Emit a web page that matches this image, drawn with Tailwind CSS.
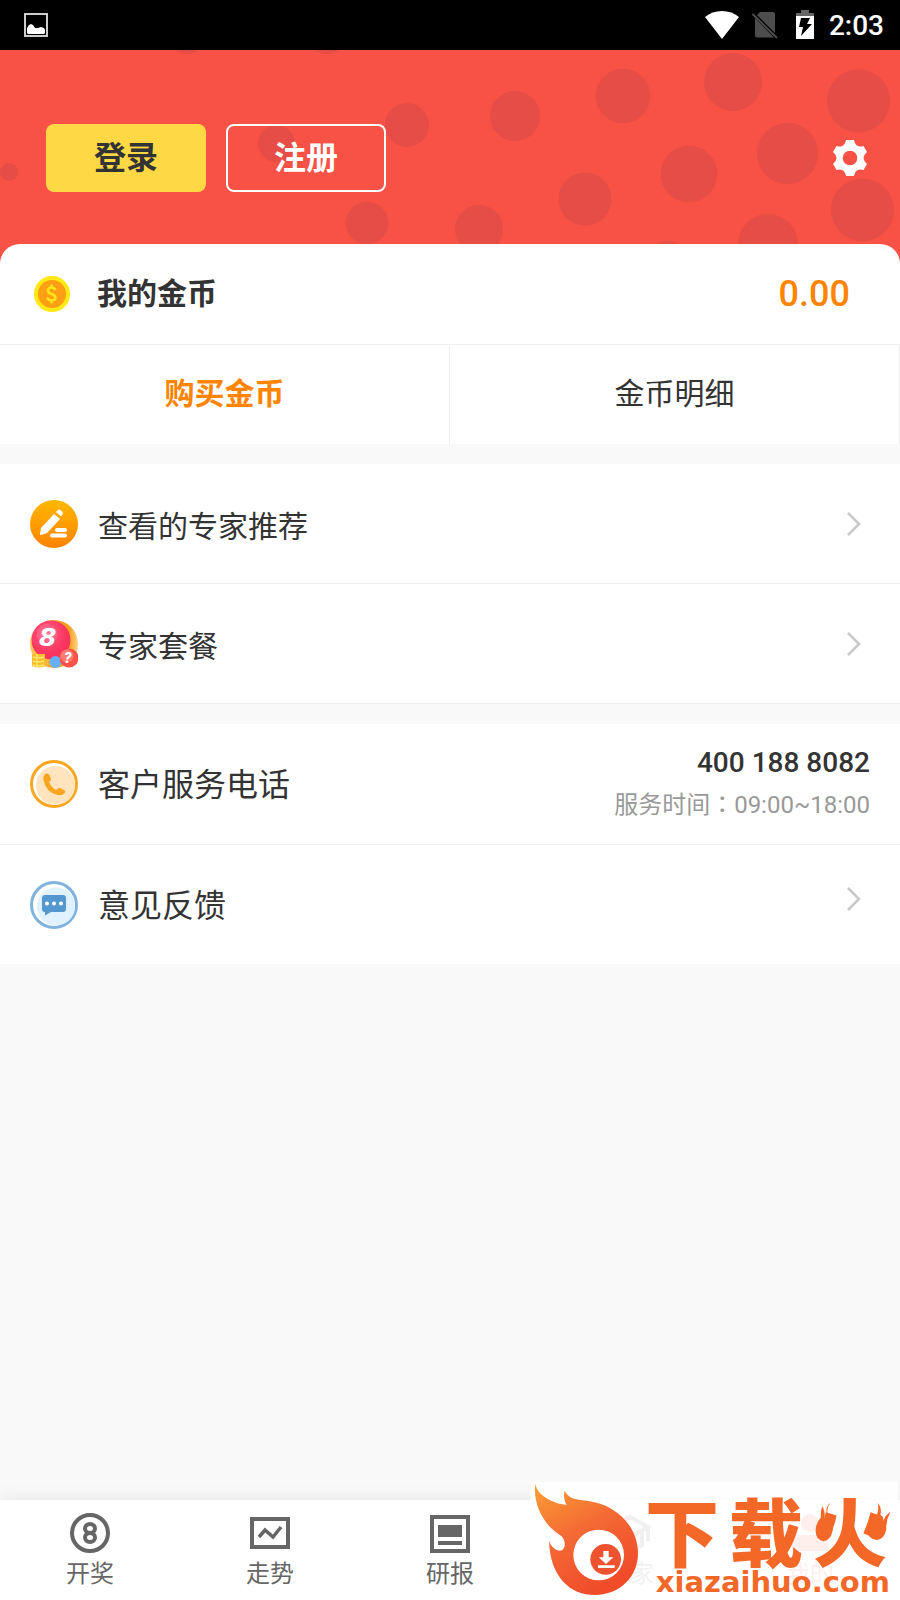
<!DOCTYPE html>
<html lang="zh-CN">
<head>
    <meta charset="UTF-8">
    <meta name="viewport" content="width=device-width, initial-scale=1.0">
    <title>我的</title>
    <script src="https://cdn.jsdelivr.net/npm/@tailwindcss/browser@4"></script>
</head>
<body class="bg-[#f9f9f9] font-[Roboto,'Noto_Sans_CJK_SC',sans-serif] text-[#333]">
<div class="relative flex min-h-screen flex-col">

    <!-- 状态栏 -->
    <div class="flex h-[50px] items-center bg-black pr-4 pl-6 text-white">
        <svg class="size-6" viewBox="0 0 24 24" fill="none">
            <rect x="1" y="1" width="22" height="22" stroke="#ccc" stroke-width="2"/>
            <path d="M3 20v-5l2-3 2-1 2 1 2 3 3 0 3-1 3 1 1 2v3l-1 1H4z" fill="#fff"/>
        </svg>
        <svg class="ml-auto h-7 w-[34px]" viewBox="0 0 34 28" fill="#fff">
            <path d="M0 6Q7 0 17 0t17 6L17 28z"/>
        </svg>
        <svg class="ml-3 h-7 w-7" viewBox="0 0 28 28">
            <path d="M9 1h13q2 0 2 2v19L6 4z M4 7l19 19.500H6q-2 0-2-2z" fill="#4d4d4d"/>
            <path d="M1.500 3l24.500 24" stroke="#4d4d4d" stroke-width="2"/>
        </svg>
        <svg class="ml-4 h-[30px] w-5" viewBox="0 0 20 30">
            <path d="M1 3h5V0h8v3h5v4H1z" fill="#666"/>
            <path d="M1 6h18v23H1z" fill="#fff"/>
            <path d="M6 8h9l-3 6h5L6 26l2-9H4z" fill="#000"/>
        </svg>
        <span class="ml-3.5 pt-0.5 text-[28px] leading-10 font-medium">2:03</span>
    </div>

    <!-- 头部 -->
    <header class="relative bg-[#f85145] pb-5">
        <svg class="absolute inset-0 h-full w-full" viewBox="0 50 900 214" preserveAspectRatio="xMaxYMin slice" fill="#e64d46">
            <circle cx="187" cy="37" r="17"/>
            <circle cx="327" cy="32" r="22"/>
            <circle cx="9" cy="172" r="9"/>
            <circle cx="276.500" cy="143.500" r="18.500"/>
            <circle cx="407" cy="125" r="22"/>
            <circle cx="367" cy="223" r="21.300"/>
            <circle cx="479" cy="229" r="24"/>
            <circle cx="515" cy="116" r="25"/>
            <circle cx="585" cy="199" r="26.500"/>
            <circle cx="623" cy="96" r="27.300"/>
            <circle cx="667" cy="266" r="25"/>
            <circle cx="689" cy="174" r="28.300"/>
            <circle cx="733" cy="82" r="29"/>
            <circle cx="768" cy="244" r="30"/>
            <circle cx="787.500" cy="153.500" r="30.500"/>
            <circle cx="858.500" cy="101" r="31.500"/>
            <circle cx="862.500" cy="210" r="31.500"/>
        </svg>
        <div class="relative flex items-center gap-5 pt-[74px] pr-8 pb-[52px] pl-[46px]">
            <button class="h-[68px] w-40 rounded-lg bg-[#ffd945] text-[32px] leading-10 font-bold">登录</button>
            <button class="h-[68px] w-40 rounded-lg border-2 border-white text-[32px] leading-10 font-bold text-white">注册</button>
            <button class="ml-auto" aria-label="设置">
                <svg class="size-9" viewBox="-18 -18 36 36" fill="#fff" fill-rule="evenodd">
                    <path d="M-4-18H4Q5-13 8-12 10-11 13.500-12L17-6Q13.500-3 13.500 0T17 6L13.500 12Q10 11 8 12 5 13 4 18H-4Q-5 13-8 12-10 11-13.500 12L-17 6Q-13.500 3-13.500 0T-17-6L-13.500-12Q-10-11-8-12-5-13-4-18zM0-7.300A7.300 7.300 0 1 0 0 7.300 7.300 7.300 0 1 0 0-7.300z"/>
                </svg>
            </button>
        </div>
    </header>

    <!-- 金币 -->
    <section class="relative -mt-5 rounded-t-[20px] bg-white">
        <div class="flex h-[100px] items-center pr-[50px] pl-[34px]">
            <svg class="size-9" viewBox="0 0 36 36">
                <circle cx="18" cy="18" r="18" fill="#ffe912"/>
                <circle cx="18" cy="18" r="14" fill="#ff9f14"/>
                <path d="M21.500 14Q20.500 11.500 17.500 11.500q-3.500 0-3.500 3 0 2.500 3.500 3.500t4 3.500q0 3-4 3-3.500 0-4-3M17.500 8.500v3M17.500 24.500v3" fill="none" stroke="#ffe41a" stroke-width="2.600"/>
            </svg>
            <h2 class="ml-[27px] text-[30px] leading-10 font-bold">我的金币</h2>
            <span class="ml-auto text-4xl font-medium text-[#ff8400]">0.00</span>
        </div>
        <div class="grid h-[100px] grid-cols-2 border-t border-[#eee] text-[30px] leading-10">
            <button class="border-r border-[#eee] pb-0.5 font-bold text-[#ff8400]">购买金币</button>
            <button class="border-r border-[#eee] pb-0.5">金币明细</button>
        </div>
    </section>

    <!-- 专家 -->
    <nav class="mt-5 bg-white text-[30px] leading-10">
        <a href="#" class="flex h-[120px] items-center border-b border-[#eee] pr-[38px] pl-[30px]">
            <svg class="size-12" viewBox="0 0 48 48">
                <defs>
                    <linearGradient id="pen" x2="0" y2="1"><stop stop-color="#ffb800"/><stop offset="1" stop-color="#ff8200"/></linearGradient>
                </defs>
                <circle cx="24" cy="24" r="24" fill="url(#pen)"/>
                <path d="M24 14l6 5-13 14-6 2q-1 0-1-1l1-6z M26 12l2-2q1-1 2.500 0l2 2q1 1 0 2.500l-1.500 2z" fill="#fff"/>
                <rect x="25" y="28" width="12" height="4" rx="2" fill="#fff"/>
                <rect x="20" y="33.500" width="17" height="4" rx="2" fill="#fff"/>
            </svg>
            <span class="ml-5 pt-1.5">查看的专家推荐</span>
            <svg class="ml-auto h-6 w-4" viewBox="0 0 16 24" fill="none" stroke="#c8c8c8" stroke-width="2.500"><path d="M2 1l11 11L2 23"/></svg>
        </a>
        <a href="#" class="flex h-[120px] items-center border-b border-[#eee] pr-[38px] pl-[30px]">
            <svg class="size-12" viewBox="0 0 48 48">
                <defs>
                    <linearGradient id="gold" x2="1"><stop stop-color="#ffc65a"/><stop offset=".8" stop-color="#f59a16"/><stop offset="1" stop-color="#ffd48a"/></linearGradient>
                    <radialGradient id="ball" cx=".4" cy=".35"><stop stop-color="#ff7a9c"/><stop offset=".5" stop-color="#ff5a80"/><stop offset=".55" stop-color="#ff4771"/><stop offset="1" stop-color="#f8355e"/></radialGradient>
                </defs>
                <circle cx="24" cy="24" r="24" fill="url(#gold)"/>
                <circle cx="21" cy="20" r="19.500" fill="url(#ball)"/>
                <text x="9" y="26" font-family="DejaVu Sans" font-size="25" font-weight="700" font-style="italic" fill="#fff">8</text>
                <path d="M2 34h13v12q-6 3-13 0z" fill="#f8be2c"/>
                <path d="M3 37q5 2 11 0M3 41q5 2 11 0M3 45q5 2 11 0M7 34v12" stroke="#ffe56b" stroke-width="1.500" fill="none"/>
                <circle cx="25.500" cy="42" r="6" fill="#66aef5"/>
                <circle cx="39" cy="38" r="9.500" fill="#ff5248"/>
                <circle cx="37" cy="36" r="6.500" fill="#ff7a70"/>
                <text x="34" y="43" font-size="15" font-weight="900" font-style="italic" fill="#fff">?</text>
            </svg>
            <span class="ml-5 pt-1.5">专家套餐</span>
            <svg class="ml-auto h-6 w-4" viewBox="0 0 16 24" fill="none" stroke="#c8c8c8" stroke-width="2.500"><path d="M2 1l11 11L2 23"/></svg>
        </a>
    </nav>

    <!-- 客服 -->
    <nav class="mt-5 bg-white text-[32px] leading-10">
        <a href="#" class="flex h-[121px] items-center border-b border-[#eee] pr-[30px] pl-[30px]">
            <svg class="size-12" viewBox="0 0 48 48">
                <circle cx="24" cy="24" r="22.500" fill="#fff" stroke="#f9a720" stroke-width="3"/>
                <circle cx="25.500" cy="25.500" r="19.500" fill="#ffe4bd"/>
                <path d="M15 14q3-1.500 4.500 1l1.500 4q0 2-2 3 2 5 7 8 2-2.500 4-2l4 2q2 2 .5 3-3 3-7 2-12-3-14-15-.5-4 1.500-6z" fill="#f9a51f"/>
            </svg>
            <span class="ml-5 pt-0.5">客户服务电话</span>
            <span class="ml-auto flex flex-col text-right">
                <strong class="text-[28px] leading-10 font-medium">400 188 8082</strong>
                <span class="text-2xl leading-10 text-[#999]">服务时间<span lang="zh-TW" class="font-['Noto_Sans_CJK_TC']">：</span>09:00~18:00</span>
            </span>
        </a>
        <a href="#" class="flex h-[119px] items-center pr-[38px] pl-[30px]">
            <svg class="size-12" viewBox="0 0 48 48">
                <circle cx="24" cy="24" r="22.500" fill="#fff" stroke="#80b4de" stroke-width="3"/>
                <circle cx="26" cy="25.500" r="19" fill="#e0f1ff"/>
                <path d="M15 14h18q3 0 3 3v11q0 3-3 3H21l-6 3.500V31q-3 0-3-3V17q0-3 3-3z" fill="#5598d0"/>
                <g fill="#fff"><circle cx="17" cy="22.500" r="2"/><circle cx="24" cy="22.500" r="2"/><circle cx="31" cy="22.500" r="2"/></g>
            </svg>
            <span class="ml-5 pt-0.5">意见反馈</span>
            <svg class="mb-3 ml-auto h-6 w-4" viewBox="0 0 16 24" fill="none" stroke="#c8c8c8" stroke-width="2.500"><path d="M2 1l11 11L2 23"/></svg>
        </a>
    </nav>

    <!-- 底部导航 -->
    <nav class="mt-auto grid h-[100px] grid-cols-5 bg-white text-2xl leading-9 text-[#666] shadow-[0_-2px_16px_rgba(0,0,0,0.08)]">
        <a href="#" class="flex flex-col items-center pt-3">
            <svg class="size-11" viewBox="0 0 44 44" fill="none" stroke="#666" stroke-width="4">
                <circle cx="22" cy="21" r="18"/>
                <ellipse cx="22" cy="16.500" rx="5" ry="4.500"/><ellipse cx="22" cy="25.500" rx="5" ry="4.500"/>
            </svg>
            开奖
        </a>
        <a href="#" class="flex flex-col items-center pt-3">
            <svg class="size-11" viewBox="0 0 44 44" fill="none" stroke="#666" stroke-width="4">
                <path d="M2 7h0M4 7h36v28H4z"/>
                <path d="M11 25l6-7 8 7 8-10" stroke-width="3.500"/>
            </svg>
            走势
        </a>
        <a href="#" class="flex flex-col items-center pt-3">
            <svg class="size-11" viewBox="0 0 44 44" fill="none" stroke="#666" stroke-width="4">
                <path d="M4 5h36v34H4z"/>
                <path d="M10 13h24v12H10zM10 29h24v4H10z" fill="#666" stroke="none"/>
            </svg>
            研报
        </a>
        <a href="#" class="flex flex-col items-center pt-3">
            <svg class="size-11" viewBox="0 0 44 44" fill="none" stroke="#666" stroke-width="4">
                <path d="M4 15L22 5l18 10-18 10zM10 20v13l12 6 12-6V20M40 15v14"/>
            </svg>
            专家
        </a>
        <a href="#" class="flex flex-col items-center pt-3 text-[#f95246]">
            <svg class="size-11" viewBox="0 0 44 44" fill="#f95246">
                <circle cx="22" cy="11" r="9"/>
                <path d="M4 39V28q0-5 5-5h26q5 0 5 5v11z"/>
            </svg>
            我的
        </a>
    </nav>

    <!-- 水印 -->
    <div class="absolute right-[2px] bottom-0 flex h-[118px] w-[368px] bg-white/90 text-[#f4601c]">
        <svg class="h-[118px] w-[110px] shrink-0 opacity-95" viewBox="30 36 330 354">
            <defs>
                <linearGradient id="flame" x1="0" y1="0" x2=".5" y2="1"><stop stop-color="#fb9c2c"/><stop offset=".5" stop-color="#f4622a"/><stop offset="1" stop-color="#f0431f"/></linearGradient>
            </defs>
            <path d="M46 42C52 75 95 100 140 105 132 90 130 78 134 62 145 85 165 88 200 92 290 102 354 170 354 250 354 320 300 375 225 375 150 375 90 320 87 212 95 235 115 246 127 240 140 230 135 205 120 195 70 165 38 100 46 42z" fill="url(#flame)"/>
            <circle cx="236" cy="255" r="76" fill="#fff"/>
            <circle cx="257" cy="268" r="46" fill="#ee4a24"/>
            <path d="M250 243h16v19h14l-22 20-22-20h14zM234 286h50v8h-50z" fill="#fff"/>
        </svg>
        <div class="relative flex-1 opacity-95">
            <div class="grid h-[84px] grid-cols-3 pt-6 pr-1.5 text-center text-[74px] leading-[60px] font-black">
                <span>下</span><span>载</span><span>火</span>
            </div>
            <svg class="absolute top-5 right-[5px] h-10 w-20" viewBox="880 96 240 120" fill="#f4601c">
                <path d="M932 98q-12 16-8 34 20 30 14 54-6 24-26 28-22-4-24-28-2-24 16-44-2-20 4-34 10 18 6 42 10-12 6-26 0-16 12-26z"/>
                <path d="M1074 98q14 16 8 36 12 8 8 20 8-20 22-28-14 26-12 52-6 30-28 32-28-4-30-28 0-20 24-38 14-20 8-46z"/>
            </svg>
            <div class="pr-2 text-right font-['DejaVu_Sans'] text-[29px] leading-8 font-bold">xiazaihuo.com</div>
        </div>
    </div>
</div>
</body>
</html>
